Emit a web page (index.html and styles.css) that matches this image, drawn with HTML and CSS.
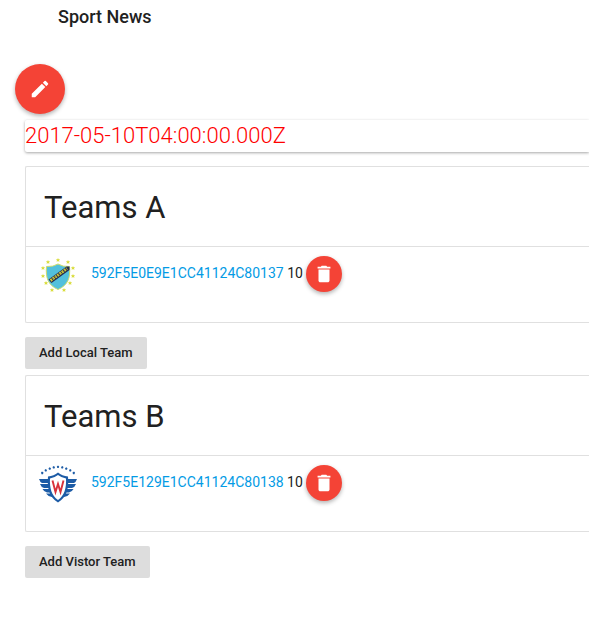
FILE: index.html
```html
<!DOCTYPE html>
<html lang="en">
<head>
<meta charset="utf-8">
<meta name="viewport" content="width=device-width, initial-scale=1">
<title>Sport News</title>
<link rel="stylesheet" href="styles.css">
</head>
<body>
<header class="toolbar">
  <h1 class="toolbar-title">Sport News</h1>
</header>
<main class="match">
  <button class="fab fab-large" type="button" aria-label="Edit">
    <svg viewBox="0 0 24 24" aria-hidden="true"><path d="M3 17.25V21h3.75L17.81 9.94l-3.75-3.75L3 17.25zM20.71 7.04a1 1 0 0 0 0-1.41l-2.34-2.34a1 1 0 0 0-1.41 0l-1.83 1.83 3.75 3.75 1.83-1.83z"/></svg>
  </button>
  <div class="match-date">2017-05-10T04:00:00.000Z</div>

  <section class="collection">
    <h2 class="collection-header">Teams A</h2>
    <div class="collection-item">
      <svg class="crest" viewBox="0 -1 42 42" aria-hidden="true">
        <path d="M9.500 9.500Q16 10 21 7Q26 10 32.500 9.500C33.500 21 31 28 21 32.500C11 28 8.500 21 9.500 9.500Z" fill="#52c0dc" stroke="#cddc6a" stroke-width="1"/>
        <path d="M11.500 22.500L29.500 9.500L32.500 9.500L32.500 13L14.500 26Z" fill="#242c52"/>
        <path d="M13.500 23.500L30 11.500" stroke="#d2cc35" stroke-width="2.800" stroke-dasharray="2 .8"/>
        <path d="M13.500 23.500L30 11.500" stroke="#242c52" stroke-width=".7" stroke-dasharray=".7 1.200"/>
        <g fill="#d9dc3a">
          <path id="star" d="M21 1l.6 1.300 1.500.1-1.100 1 .4 1.500-1.400-.8-1.400.8.4-1.500-1.100-1 1.500-.1z"/>
          <use href="#star" x="-10" y="2"/><use href="#star" x="10" y="2"/>
          <use href="#star" x="-15" y="8"/><use href="#star" x="15" y="8"/>
          <use href="#star" x="-15" y="16"/><use href="#star" x="15" y="16"/>
          <use href="#star" x="-12" y="23"/><use href="#star" x="12" y="23"/>
          <use href="#star" x="-6" y="30"/><use href="#star" x="6" y="30"/>
        </g>
      </svg>
      <p class="team"><a class="team-link" href="#">592F5E0E9E1CC41124C80137</a> <span>10</span></p>
      <button class="fab" type="button" aria-label="Delete local team">
        <svg viewBox="0 0 24 24" aria-hidden="true"><path d="M6 19c0 1.100.9 2 2 2h8c1.100 0 2-.9 2-2V7H6v12zM19 4h-3.500l-1-1h-5l-1 1H5v2h14V4z"/></svg>
      </button>
    </div>
  </section>
  <button class="btn-add" type="button">Add Local Team</button>

  <section class="collection">
    <h2 class="collection-header">Teams B</h2>
    <div class="collection-item">
      <svg class="crest" viewBox="0 1 42 42" aria-hidden="true">
        <g fill="#1d5ca6">
          <path d="M2 15H14V19H5Q3 18 2 15ZM3 20H14V24H7Q4 23 3 20ZM5.500 25H14V28.500H10Q7 28 5.500 25ZM9 29.500H15V33Q11 32.500 9 29.500Z"/>
          <path d="M40 15H28V19H37Q39 18 40 15ZM39 20H28V24H35Q38 23 39 20ZM36.500 25H28V28.500H32Q35 28 36.500 25ZM33 29.500H27V33Q31 32.500 33 29.500Z"/>
          <path d="M21 8.500Q25 12 31 12.500C32 24 30 33 21 38.500C12 33 10 24 11 12.500Q17 12 21 8.500Z"/>
        </g>
        <path d="M21 11Q25 14 29 14.500C29.500 24 27.500 31.500 21 36C14.500 31.500 12.500 24 13 14.500Q17 14 21 11Z" fill="#fff"/>
        <path d="M15.500 16.500L18.500 28L21 20L23.500 28L26.500 16.500" fill="none" stroke="#d8323b" stroke-width="1.900"/>
        <g fill="#1d5ca6">
          <path d="M4 8.500l1-1 1.500 1-.5 1.700H4.500zM7.500 6l1.200-1 1.300 1-.5 1.500H8zM11.500 4.200l1.200-1 1.300 1-.5 1.500H12zM15.500 3l1.200-1L18 3l-.5 1.500H16zM19.800 2.600l1.200-1 1.200 1-.5 1.500h-1.400z"/>
          <path d="M38 8.500l-1-1-1.500 1 .5 1.700h1.500zM34.500 6l-1.200-1L32 6l.5 1.500H34zM30.500 4.200l-1.200-1-1.300 1 .5 1.500H30zM26.500 3l-1.200-1L24 3l.5 1.500H26z"/>
        </g>
      </svg>
      <p class="team"><a class="team-link" href="#">592F5E129E1CC41124C80138</a> <span>10</span></p>
      <button class="fab" type="button" aria-label="Delete visitor team">
        <svg viewBox="0 0 24 24" aria-hidden="true"><path d="M6 19c0 1.100.9 2 2 2h8c1.100 0 2-.9 2-2V7H6v12zM19 4h-3.500l-1-1h-5l-1 1H5v2h14V4z"/></svg>
      </button>
    </div>
  </section>
  <button class="btn-add" type="button">Add Vistor Team</button>
</main>
</body>
</html>
```
FILE: styles.css
```css
* {
  box-sizing: border-box;
}

body {
  margin: 0;
  background: #fff;
  color: #212121;
  font-family: Roboto, "Liberation Sans", sans-serif;
  font-size: 14px;
  line-height: 20px;
}

h1,
h2,
p {
  margin: 0;
}

.toolbar {
  padding: 4px 58px;
}

.toolbar-title {
  font-size: 18px;
  font-weight: 500;
  line-height: 26px;
}

.match {
  display: flex;
  flex-direction: column;
  align-items: flex-start;
  padding: 30px 0 40px 25px;
}

.fab {
  display: flex;
  flex: none;
  align-items: center;
  justify-content: center;
  width: 36px;
  height: 36px;
  padding: 0;
  border: 0;
  border-radius: 50%;
  background: #f44336;
  box-shadow: 0 2px 4px rgba(0, 0, 0, 0.3);
  cursor: pointer;
}

.fab svg {
  width: 22px;
  height: 22px;
  fill: #fff;
}

.fab-large {
  width: 50px;
  height: 50px;
  margin-left: -10px;
}

.match-date {
  align-self: stretch;
  margin: 6px 0 14px;
  border-radius: 2px 0 0 2px;
  box-shadow: 0 1px 3px rgba(0, 0, 0, 0.35);
  color: #f00;
  font-size: 22px;
  font-weight: 300;
  line-height: 32px;
}

.collection {
  align-self: stretch;
  border: 1px solid #e0e0e0;
  border-right: 0;
  border-radius: 2px 0 0 2px;
}

.collection-header {
  padding: 21px 18px 18px;
  border-bottom: 1px solid #e0e0e0;
  font-size: 31px;
  font-weight: 400;
  line-height: 40px;
}

.collection-item {
  display: flex;
  align-items: flex-start;
  padding: 9px 11px 24px;
}

.crest {
  flex: none;
  width: 42px;
  height: 42px;
}

.team {
  padding: 7px 3px 7px 12px;
}

.team-link {
  color: #039be5;
  text-decoration: none;
}

.btn-add {
  height: 32px;
  margin: 14px 0 6px;
  padding: 0 14px;
  border: 0;
  border-radius: 2px;
  background: #ddd;
  color: #212121;
  font: 500 13px/32px Roboto, "Liberation Sans", sans-serif;
  cursor: pointer;
}
```
